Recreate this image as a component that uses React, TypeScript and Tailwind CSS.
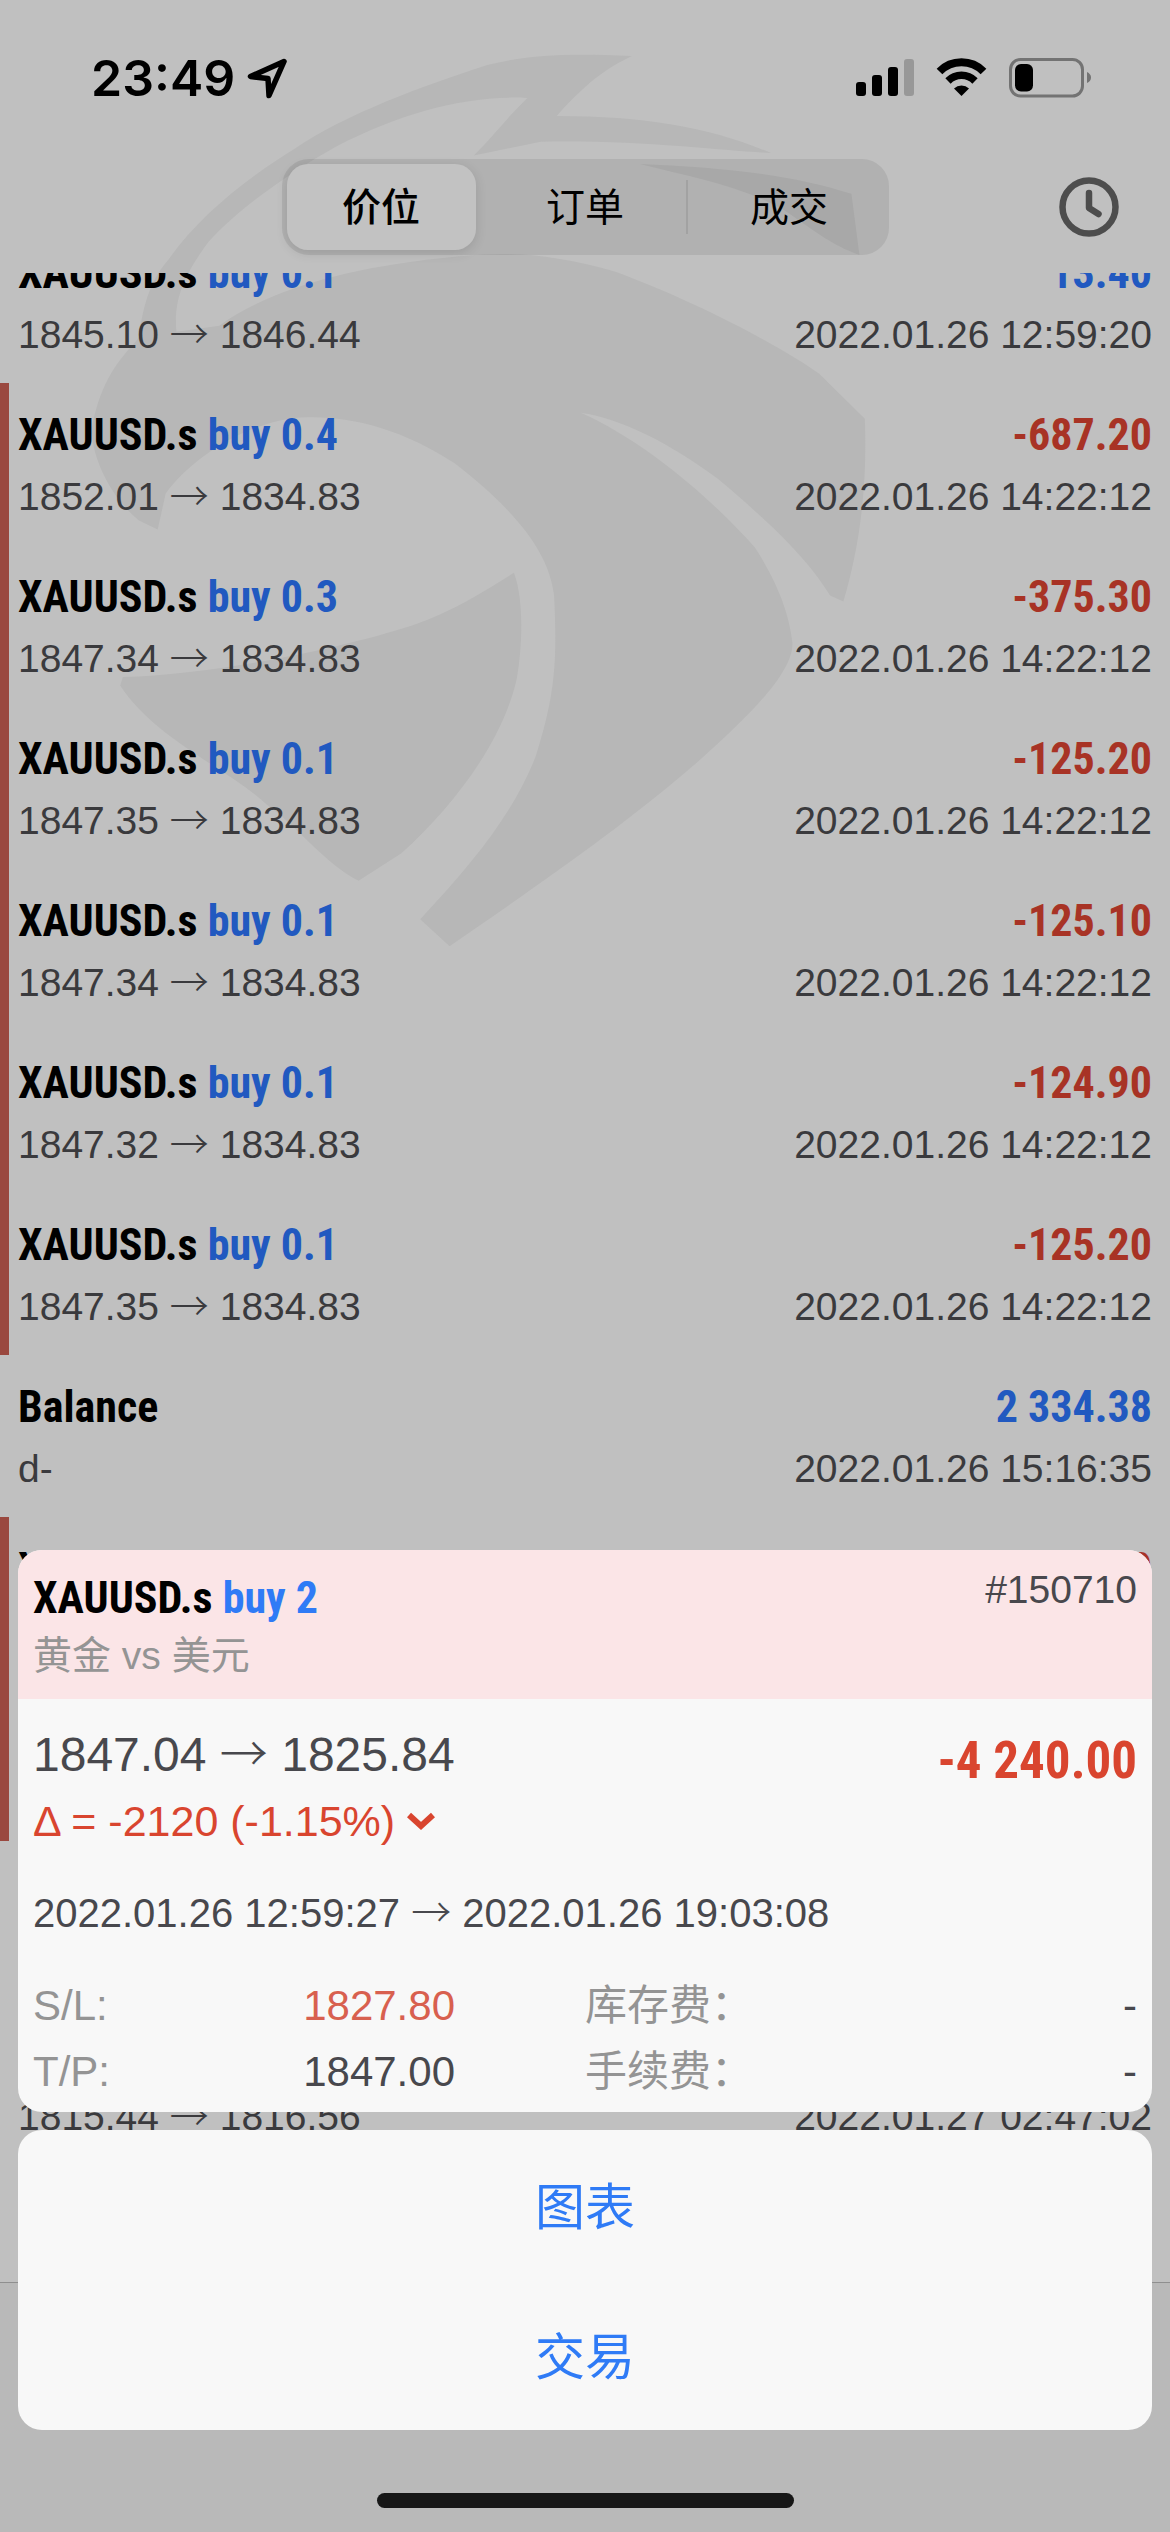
import { useState } from 'react';

type Deal = {
  symbol: string;
  side?: string;
  profit: string;
  detail: string[];
  time: string;
  flagged?: boolean;
};

const DEALS: Deal[] = [
  { symbol: 'XAUUSD.s', side: 'buy 0.1', profit: '13.40', detail: ['1845.10', '1846.44'], time: '2022.01.26 12:59:20' },
  { symbol: 'XAUUSD.s', side: 'buy 0.4', profit: '-687.20', detail: ['1852.01', '1834.83'], time: '2022.01.26 14:22:12', flagged: true },
  { symbol: 'XAUUSD.s', side: 'buy 0.3', profit: '-375.30', detail: ['1847.34', '1834.83'], time: '2022.01.26 14:22:12', flagged: true },
  { symbol: 'XAUUSD.s', side: 'buy 0.1', profit: '-125.20', detail: ['1847.35', '1834.83'], time: '2022.01.26 14:22:12', flagged: true },
  { symbol: 'XAUUSD.s', side: 'buy 0.1', profit: '-125.10', detail: ['1847.34', '1834.83'], time: '2022.01.26 14:22:12', flagged: true },
  { symbol: 'XAUUSD.s', side: 'buy 0.1', profit: '-124.90', detail: ['1847.32', '1834.83'], time: '2022.01.26 14:22:12', flagged: true },
  { symbol: 'XAUUSD.s', side: 'buy 0.1', profit: '-125.20', detail: ['1847.35', '1834.83'], time: '2022.01.26 14:22:12', flagged: true },
  { symbol: 'Balance', profit: '2 334.38', detail: ['d-'], time: '2022.01.26 15:16:35' },
  { symbol: 'XAUUSD.s', side: 'buy 2', profit: '-4 240.00', detail: ['1847.04', '1825.84'], time: '2022.01.26 19:03:08', flagged: true },
  { symbol: 'XAUUSD.s', side: 'buy 2', profit: '-4 240.00', detail: ['1847.04', '1825.84'], time: '2022.01.26 19:03:08', flagged: true },
  { symbol: 'XAUUSD.s', side: 'buy 0.1', profit: '11.20', detail: ['1815.44', '1816.56'], time: '2022.01.27 02:47:02' },
  { symbol: 'XAUUSD.s', side: 'buy 0.1', profit: '11.20', detail: ['1815.44', '1816.56'], time: '2022.01.27 02:47:02' },
];

const TABS = ['价位', '订单', '成交'];

const NARROW = "font-['Roboto_Condensed','Liberation_Sans_Narrow','Liberation_Sans',sans-serif] font-bold";

function Arrow() {
  return <span className="font-['Noto_Sans_CJK_SC',sans-serif] font-light leading-none">→</span>;
}

function Watermark() {
  return (
    <svg
      className="absolute left-[80px] top-[20px] w-[840px] h-[940px]"
      viewBox="0 0 1568 1568"
      preserveAspectRatio="none"
      fill="#b7b7b7"
      aria-hidden="true"
    >
      <path d="M110 530C118 470 135 430 165 400C215 335 300 270 400 215C500 155 640 110 760 75C850 55 930 57 1030 60C970 85 930 120 890 160C1060 160 1180 180 1290 222C1200 218 1050 200 860 203L735 226C770 195 800 160 835 130C720 125 600 155 480 210C380 260 290 320 240 370C190 430 175 470 180 520L260 510C360 445 520 410 700 395C800 385 880 390 1000 420C1150 470 1300 540 1380 590L1465 665C1470 780 1455 880 1425 970L1400 960C1360 900 1290 840 1190 765C1100 705 1010 665 935 655C1060 705 1180 800 1260 880C1310 950 1325 1000 1330 1040C1330 1090 1250 1160 1150 1240C1000 1355 860 1440 690 1545L635 1500C740 1400 810 1320 850 1230C890 1120 890 1060 885 960C875 880 800 810 700 740C590 675 480 655 390 665C290 680 200 740 160 790L145 850L110 835C50 790 20 720 22 680C40 600 70 570 110 530Z" />
      <path d="M810 922C830 970 825 1050 815 1100C790 1200 700 1310 600 1390L520 1436C460 1410 400 1340 350 1310C280 1250 140 1200 75 1110L80 1096C250 1092 480 1050 620 1010C700 985 760 950 810 922Z" />
      <path d="M1045 240C1180 245 1320 255 1440 290L1455 392C1400 375 1370 350 1310 315C1230 275 1140 262 1045 240Z" />
    </svg>
  );
}

function StatusBar() {
  return (
    <div className="h-[106px] pt-[52px] pl-[91px] pr-[78px] flex items-start justify-between text-black">
      <div className="flex items-center gap-3">
        <span className="font-['Inter',sans-serif] font-semibold text-[50px] leading-[52px]">23:49</span>
        <svg className="w-[41px] h-[42px]" viewBox="0 0 41 42" fill="none" stroke="#000" strokeWidth="5.500" strokeLinejoin="round">
          <path d="M37 4.500L3.500 19.500L21 21.500L22 38.500Z" />
        </svg>
      </div>
      <div className="flex items-start gap-[22px] pt-[6px]">
        <svg className="w-[58px] h-[39px]" viewBox="0 0 58 39">
          <rect x="0" y="24" width="10" height="14" rx="3" />
          <rect x="16" y="17" width="10" height="21" rx="3" />
          <rect x="32" y="9" width="10" height="29" rx="3" />
          <rect x="48" y="1" width="10" height="37" rx="3" fill="#989898" />
        </svg>
        <svg className="w-[51px] h-[39px]" viewBox="0 0 51 39" fill="none" stroke="#000">
          <path d="M3.500 13.500A31 31 0 0 1 47.500 13.500" strokeWidth="8" />
          <path d="M12 23A19 19 0 0 1 39 23" strokeWidth="7.500" />
          <path d="M25.500 38L18 30.500A11 11 0 0 1 33 30.500Z" fill="#000" stroke="none" />
        </svg>
        <svg className="w-[83px] h-[40px]" viewBox="0 0 83 40">
          <rect x="1.500" y="1.500" width="72" height="36.500" rx="10" fill="none" stroke="#737373" strokeWidth="3" />
          <path d="M78 14Q82 16 82 19.500T78 25Z" fill="#737373" />
          <rect x="6" y="6" width="18" height="27.500" rx="6" />
        </svg>
      </div>
    </div>
  );
}

function DealRow({ deal }: { deal: Deal }) {
  const loss = deal.profit.startsWith('-');
  return (
    <li className="h-[162px] shrink-0 flex">
      <div className={`w-[9px] ${deal.flagged ? 'bg-[#9a483f]' : ''}`} />
      <div className="flex-1 pt-6 pl-[9px] pr-[18px] flex flex-col gap-[10px]">
        <div className={`flex justify-between text-[44px] leading-[56px] ${NARROW}`}>
          <span className="text-black">
            {deal.symbol} {deal.side && <span className="text-[#2159c0]">{deal.side}</span>}
          </span>
          <span className={loss ? 'text-[#a83325]' : 'text-[#2159c0]'}>{deal.profit}</span>
        </div>
        <div className="flex justify-between text-[39px] leading-[48px] text-[#3a3a3d]">
          <span>
            {deal.detail[0]}
            {deal.detail[1] && <> <Arrow /> {deal.detail[1]}</>}
          </span>
          <span>{deal.time}</span>
        </div>
      </div>
    </li>
  );
}

function Field({ label, value, className }: { label: string; value: string; className?: string }) {
  return (
    <div className={`flex justify-between ${className ?? ''}`}>
      <dt className="text-[#949494]">{label}</dt>
      <dd>{value}</dd>
    </div>
  );
}

function DealSheet() {
  return (
    <div className="absolute inset-x-0 bottom-[102px] px-[18px] flex flex-col gap-[18px]">
      <section className="rounded-[24px] overflow-hidden bg-[#f8f8f8] text-[#48484d]">
        <div className="h-[149px] px-[15px] flex justify-between bg-[#fbe5e7]">
          <div className="pt-5 flex flex-col gap-[6px]">
            <h2 className={`text-[44px] leading-[56px] text-black ${NARROW}`}>
              XAUUSD.s <span className="text-[#2f7bf6]">buy 2</span>
            </h2>
            <p className="text-[39px] leading-[48px] text-[#949494]">黄金 vs 美元</p>
          </div>
          <span className="pt-4 text-[39px] leading-[48px]">#150710</span>
        </div>
        <div className="px-[15px] pt-[26px] pb-[7px]">
          <div className="flex justify-between">
            <div className="flex flex-col gap-3">
              <div className="text-[48px] leading-[60px]">1847.04 <Arrow /> 1825.84</div>
              <div className="flex items-center gap-3 text-[43px] leading-[48px] text-[#d9452f]">
                Δ = -2120 (-1.15%)
                <svg className="w-[28px] h-[20px]" viewBox="0 0 28 20" fill="none" stroke="currentColor" strokeWidth="6">
                  <path d="M2 4L14 15L26 4" />
                </svg>
              </div>
            </div>
            <div className={`pt-[6px] text-[51px] leading-[60px] text-[#d9452f] ${NARROW}`}>-4 240.00</div>
          </div>
          <div className="mt-11 text-[40px] leading-[48px]">2022.01.26 12:59:27 <Arrow /> 2022.01.26 19:03:08</div>
          <dl className="mt-9 grid grid-cols-2 text-[42px] leading-[66px]">
            <Field label="S/L:" value="1827.80" className="pr-[130px] text-[#d8604f]" />
            <Field label="库存费：" value="-" />
            <Field label="T/P:" value="1847.00" className="pr-[130px]" />
            <Field label="手续费：" value="-" />
          </dl>
        </div>
      </section>
      <section className="rounded-[24px] overflow-hidden bg-[#f8f8f8] flex flex-col text-[50px] text-[#2f7bf6]">
        <button className="h-[150px] pt-[6px]">图表</button>
        <button className="h-[150px] pt-[6px]">交易</button>
      </section>
    </div>
  );
}

function App() {
  const [tab, setTab] = useState(0);

  return (
    <div className="relative isolate h-screen overflow-hidden flex flex-col bg-[#c0c0c0] font-['Liberation_Sans','Noto_Sans_CJK_SC',sans-serif]">
      <div className="absolute inset-0 -z-10">
        <Watermark />
      </div>

      {/* Header */}
      <header className="h-[273px] shrink-0">
        <StatusBar />
        <div className="pt-[53px] grid grid-cols-[1fr_auto_1fr] items-center">
          <nav className="col-start-2 w-[607px] h-[96px] p-[5px] rounded-[27px] bg-black/8 flex">
            {TABS.map((name, i) => (
              <div key={name} className="flex flex-1 last:flex-none items-center">
                <button
                  onClick={() => setTab(i)}
                  className={`w-[189px] h-[86px] pt-[2px] rounded-[21px] text-[39px] text-black ${
                    i === tab ? 'font-medium bg-[#c2c2c2] shadow-[0_3px_12px_rgba(0,0,0,0.12)]' : ''
                  }`}
                >
                  {name}
                </button>
                {i < TABS.length - 1 && (
                  <div className={`w-[2px] h-[54px] mx-auto ${i === tab ? '' : 'bg-[#a2a2a2]'}`} />
                )}
              </div>
            ))}
          </nav>
          <button aria-label="历史" className="justify-self-end mr-[51px]">
            <svg className="w-[60px] h-[60px]" viewBox="0 0 60 60" fill="none" stroke="#4d4d4d" strokeWidth="6.500" strokeLinecap="round" strokeLinejoin="round">
              <circle cx="30" cy="30" r="26.500" />
              <path d="M30 16V31L39.500 37" />
            </svg>
          </button>
        </div>
      </header>

      {/* Deals */}
      <main className="flex-1 min-h-0 overflow-hidden">
        <ul className="-mt-[52px] flex flex-col">
          {DEALS.map((deal, i) => (
            <DealRow key={i} deal={deal} />
          ))}
        </ul>
      </main>

      {/* Bottom bar */}
      <footer className="h-[250px] shrink-0 border-t border-[#8f8f8f] bg-[#b9b9b9] flex items-end justify-center pb-6">
        <div className="w-[417px] h-[15px] rounded-full bg-[#171717]" />
      </footer>

      <DealSheet />
    </div>
  );
}

export default App;
